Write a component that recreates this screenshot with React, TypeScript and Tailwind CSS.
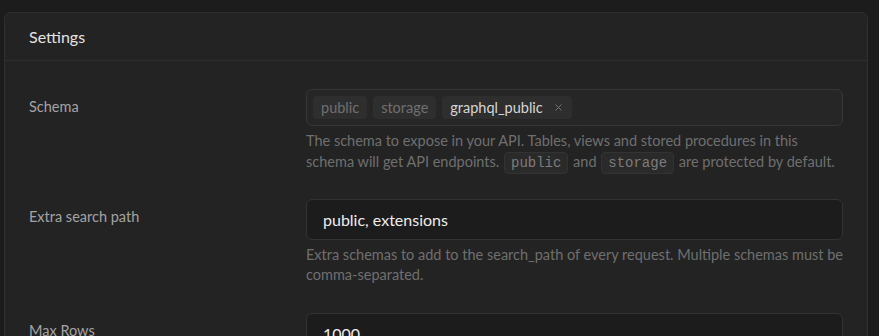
import { X } from 'lucide-react'

const font = { fontFamily: 'Lato, "Noto Sans", sans-serif' }

const Code = ({ children }: { children: string }) => (
    <code className="mx-[1px] inline-block rounded-[4px] border border-[#333333] bg-[#2a2a2a] px-[6px] align-middle font-['Liberation_Mono',monospace] text-[14px] leading-[20px] text-[#7c7c7c]">
        {children}
    </code>
)

const Tag = ({ label, active, removable }: { label: string; active?: boolean; removable?: boolean }) => (
    <span
        className={`flex h-[23px] items-center gap-[10px] rounded-[4px] bg-[#2e2e2e] px-[8px] text-[14.5px] ${active ? 'text-[#d6d6d6]' : 'text-[#707070]'}`}
    >
        {label}
        {removable && <X size={11} strokeWidth={2} className="text-[#7a7a7a]" />}
    </span>
)

const Row = ({ label, className, children }: { label: string; className?: string; children: React.ReactNode }) => (
    <div className={`grid grid-cols-[277px_1fr] ${className ?? ''}`}>
        <div className="pt-[8px] text-[14.5px] leading-5 text-[#a3a3a3]">{label}</div>
        <div>{children}</div>
    </div>
)

export default function App() {
    return (
        <div className="min-h-screen bg-[#1c1c1c] pt-[12px] pl-[4px]" style={font}>
            <div className="w-[864px] rounded-[6px] border border-[#2e2e2e] bg-[#232323]">
                <div className="flex h-[48px] items-center border-b border-[#2e2e2e] px-[24px] pt-[1px]">
                    <h2 className="text-[16px] text-[#e4e4e4]">Settings</h2>
                </div>

                <div className="flex flex-col px-[24px] pt-[28px] pb-[24px]">
                    <Row label="Schema">
                        <div className="flex h-[37px] items-center gap-[6px] rounded-[6px] border border-[#363636] bg-[#262626] px-[6px]">
                            <Tag label="public" />
                            <Tag label="storage" />
                            <Tag label="graphql_public" active removable />
                        </div>
                        <p className="mt-[4px] text-[14.5px] leading-[21px] text-[#6f6f6f]">
                            The schema to expose in your API. Tables, views and stored procedures in this schema will get API endpoints. <Code>public</Code> and <Code>storage</Code> are protected by default.
                        </p>
                    </Row>

                    <Row label="Extra search path" className="mt-[25px]">
                        <input
                            readOnly
                            value="public, extensions"
                            className="h-[41px] w-full rounded-[6px] border border-[#333333] bg-[#1c1c1c] px-[16px] text-[16px] text-[#ededed] outline-none"
                        />
                        <p className="mt-[5px] text-[14.5px] leading-5 text-[#6f6f6f]">
                            Extra schemas to add to the search_path of every request. Multiple schemas must be comma-separated.
                        </p>
                    </Row>

                    <Row label="Max Rows" className="mt-[28px]">
                        <input
                            readOnly
                            value="1000"
                            className="h-[41px] w-full rounded-[6px] border border-[#333333] bg-[#1c1c1c] px-[16px] text-[16px] text-[#ededed] outline-none"
                        />
                        <p className="mt-[5px] text-[14.5px] leading-5 text-[#6f6f6f]">
                            The maximum number of rows returned from a view, table, or stored procedure.
                        </p>
                    </Row>
                </div>
            </div>
        </div>
    )
}
